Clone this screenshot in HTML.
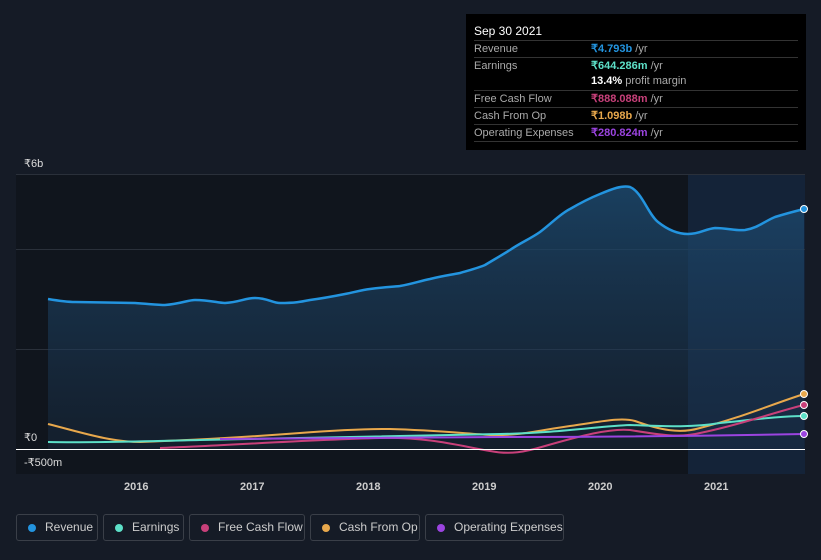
<!DOCTYPE html>
<html><head><style>
body{margin:0;width:821px;height:560px;background:#151b26;font-family:"Liberation Sans",sans-serif;overflow:hidden;position:relative}
.tt{position:absolute;left:466px;top:14px;width:340px;height:136px;background:#000;color:#fff;font-size:11px}
.tt .h{position:absolute;left:8px;top:10px;font-size:12px}
.row{position:absolute;left:8px;width:324px;border-top:1px solid #333;height:16px;line-height:16px;color:#aaa}
.row span{position:absolute;left:117px}
.leg{position:absolute;top:514px;height:27px;border:1px solid #3a3f48;border-radius:3px;color:#ccc;font-size:12px;line-height:25px;box-sizing:border-box;white-space:nowrap}
.leg i{position:absolute;left:11px;top:9px;width:8px;height:8px;border-radius:50%}
.leg b{font-weight:normal;position:absolute;left:28px}
.ax{position:absolute;color:#ddd;font-size:11px}
</style></head><body>
<svg width="821" height="560" style="position:absolute;left:0;top:0">
<defs><linearGradient id="g" x1="0" y1="0" x2="0" y2="1"><stop offset="0" stop-color="#1c4a70" stop-opacity=".8"/><stop offset="1" stop-color="#1c3550" stop-opacity=".3"/></linearGradient></defs>
<rect x="16" y="174" width="672" height="300" fill="#10151d"/>
<rect x="688" y="174" width="117" height="300" fill="#142338"/>
<g stroke="#2a303a" stroke-width="1"><line x1="16" y1="174.5" x2="805" y2="174.5"/><line x1="16" y1="249.5" x2="805" y2="249.5"/><line x1="16" y1="349.5" x2="805" y2="349.5"/></g>
<path d="M48,299 C60,301 70,302 75,302 L135,303 C150,304 158,305 165,305 C180,304 188,300 195,300 C210,300 218,303 225,303 C240,302 245,298 255,298 C268,298 272,303 280,303 C295,303 300,302 310,300 C325,298 335,296 345,294 C355,292 362,290 370,289 C385,287 392,287 400,286 C412,284 420,281 430,279 C442,276 450,275 460,273 C470,270 478,268 485,265 C495,259 502,255 510,250 C520,243 530,239 540,232 C552,223 560,214 570,209 C582,202 590,198 600,194 C612,189 622,185 630,187 C642,192 648,214 658,222 C668,230 678,234 688,234 C700,234 705,229 715,228 C728,228 735,231 745,230 C758,228 765,221 775,217 C788,213 796,211 804,209 L804,449 L48,449 Z" fill="url(#g)"/>
<path d="M48,299 C60,301 70,302 75,302 L135,303 C150,304 158,305 165,305 C180,304 188,300 195,300 C210,300 218,303 225,303 C240,302 245,298 255,298 C268,298 272,303 280,303 C295,303 300,302 310,300 C325,298 335,296 345,294 C355,292 362,290 370,289 C385,287 392,287 400,286 C412,284 420,281 430,279 C442,276 450,275 460,273 C470,270 478,268 485,265 C495,259 502,255 510,250 C520,243 530,239 540,232 C552,223 560,214 570,209 C582,202 590,198 600,194 C612,189 622,185 630,187 C642,192 648,214 658,222 C668,230 678,234 688,234 C700,234 705,229 715,228 C728,228 735,231 745,230 C758,228 765,221 775,217 C788,213 796,211 804,209" fill="none" stroke="#2394df" stroke-width="2.5"/>
<path d="M48,424 C80,432 110,442 140,442 C200,440 260,436 300,433 C340,430 370,429 390,429 C430,430 460,433 490,435 C520,436 540,430 570,426 C600,422 620,417 635,421 C660,430 680,434 700,428 C740,418 770,405 804,394" fill="none" stroke="#e8a84c" stroke-width="2"/>
<path d="M48,442 C100,443 150,441 200,440 C300,438 400,436 500,434 C560,433 600,426 630,425 C660,426 690,428 720,423 C750,420 780,416 804,416" fill="none" stroke="#5de0c8" stroke-width="2"/>
<path d="M160,448 C220,446 300,440 380,438 C430,437 460,446 490,451 C510,455 525,452 545,446 C580,436 610,428 630,430 C660,435 680,438 700,433 C740,425 775,412 804,405" fill="none" stroke="#c8407a" stroke-width="2"/>
<path d="M220,439 C300,438 400,437 500,437 C600,437 700,436 804,434" fill="none" stroke="#9b44e0" stroke-width="2"/>
<line x1="16" y1="449.5" x2="805" y2="449.5" stroke="#fff" stroke-width="1"/>
<g stroke="#fff" stroke-width="1"><circle cx="804" cy="209" r="3.5" fill="#2394df"/><circle cx="804" cy="394" r="3.5" fill="#e8a84c"/><circle cx="804" cy="405" r="3.5" fill="#c8407a"/><circle cx="804" cy="416" r="3.5" fill="#5de0c8"/><circle cx="804" cy="434" r="3.5" fill="#9b44e0"/></g>
</svg>
<div class="ax" style="left:24px;top:157px">₹6b</div>
<div class="ax" style="left:24px;top:431px">₹0</div>
<div class="ax" style="left:24px;top:456px">-₹500m</div>
<div class="ax" style="left:124px;top:481px;font-weight:bold;color:#ccc">2016</div>
<div class="ax" style="left:240px;top:481px;font-weight:bold;color:#ccc">2017</div>
<div class="ax" style="left:356px;top:481px;font-weight:bold;color:#ccc">2018</div>
<div class="ax" style="left:472px;top:481px;font-weight:bold;color:#ccc">2019</div>
<div class="ax" style="left:588px;top:481px;font-weight:bold;color:#ccc">2020</div>
<div class="ax" style="left:704px;top:481px;font-weight:bold;color:#ccc">2021</div>
<div class="tt"><div class="h">Sep 30 2021</div>
<div class="row" style="top:26px">Revenue<span><b style="color:#2394df">₹4.793b</b> /yr</span></div>
<div class="row" style="top:43px">Earnings<span><b style="color:#5de0c8">₹644.286m</b> /yr</span></div>
<div class="row" style="top:59px;border-top:none"><span><b style="color:#fff">13.4%</b> profit margin</span></div>
<div class="row" style="top:76px">Free Cash Flow<span><b style="color:#c8407a">₹888.088m</b> /yr</span></div>
<div class="row" style="top:93px">Cash From Op<span><b style="color:#e8a84c">₹1.098b</b> /yr</span></div>
<div class="row" style="top:110px;border-bottom:1px solid #333">Operating Expenses<span><b style="color:#9b44e0">₹280.824m</b> /yr</span></div>
</div>
<div class="leg" style="left:16px;width:82px"><i style="background:#2394df"></i><b>Revenue</b></div>
<div class="leg" style="left:103px;width:81px"><i style="background:#5de0c8"></i><b>Earnings</b></div>
<div class="leg" style="left:189px;width:116px"><i style="background:#c8407a"></i><b>Free Cash Flow</b></div>
<div class="leg" style="left:310px;width:110px"><i style="background:#e8a84c"></i><b>Cash From Op</b></div>
<div class="leg" style="left:425px;width:139px"><i style="background:#9b44e0"></i><b>Operating Expenses</b></div>
</body></html>
